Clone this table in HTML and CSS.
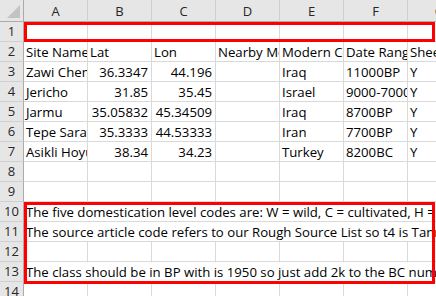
FILE: index.html
```html
<!DOCTYPE html>
<html>
<head>
<meta charset="utf-8">
<link rel="stylesheet" href="styles.css">
</head>
<body>
<div class="sheet">
  <div class="corner"><div class="tri"></div></div>
  <div class="ch">A</div><div class="ch">B</div><div class="ch">C</div><div class="ch">D</div><div class="ch">E</div><div class="ch">F</div><div class="ch">G</div>

  <div class="rh">1</div><div class="c"></div><div class="c"></div><div class="c"></div><div class="c"></div><div class="c"></div><div class="c"></div><div class="c"></div>

  <div class="rh">2</div><div class="c">Site Name</div><div class="c">Lat</div><div class="c">Lon</div><div class="c">Nearby Modern Site</div><div class="c">Modern Country</div><div class="c">Date Range</div><div class="c">Sheep</div>

  <div class="rh">3</div><div class="c">Zawi Chemi Shanidar</div><div class="c n">36.3347</div><div class="c n">44.196</div><div class="c"></div><div class="c">Iraq</div><div class="c">11000BP</div><div class="c">Y</div>

  <div class="rh">4</div><div class="c">Jericho</div><div class="c n">31.85</div><div class="c n">35.45</div><div class="c"></div><div class="c">Israel</div><div class="c">9000-7000BC</div><div class="c">Y</div>

  <div class="rh">5</div><div class="c">Jarmu</div><div class="c n">35.05832</div><div class="c n">45.34509</div><div class="c"></div><div class="c">Iraq</div><div class="c">8700BP</div><div class="c">Y</div>

  <div class="rh">6</div><div class="c">Tepe Sarab</div><div class="c n">35.3333</div><div class="c n">44.53333</div><div class="c"></div><div class="c">Iran</div><div class="c">7700BP</div><div class="c">Y</div>

  <div class="rh">7</div><div class="c">Asikli Hoyuk</div><div class="c n">38.34</div><div class="c n">34.23</div><div class="c"></div><div class="c">Turkey</div><div class="c">8200BC</div><div class="c">Y</div>

  <div class="rh">8</div><div class="c"></div><div class="c"></div><div class="c"></div><div class="c"></div><div class="c"></div><div class="c"></div><div class="c"></div>

  <div class="rh">9</div><div class="c"></div><div class="c"></div><div class="c"></div><div class="c"></div><div class="c"></div><div class="c"></div><div class="c"></div>

  <div class="rh">10</div><div class="c wide">The five domestication level codes are: W = wild, C = cultivated, H = hybrid, D = domesticated</div>

  <div class="rh">11</div><div class="c wide">The source article code refers to our Rough Source List so t4 is Tanno and Willcox</div>

  <div class="rh">12</div><div class="c"></div><div class="c"></div><div class="c"></div><div class="c"></div><div class="c"></div><div class="c"></div><div class="c"></div>

  <div class="rh">13</div><div class="c wide">The class should be in BP with is 1950 so just add 2k to the BC numbers</div>

  <div class="rh">14</div><div class="c"></div><div class="c"></div><div class="c"></div><div class="c"></div><div class="c"></div><div class="c"></div><div class="c"></div>

  <div class="hl hl1"></div>
  <div class="hl hl2"></div>
</div>
</body>
</html>
```

FILE: styles.css
```css
html, body {
  margin: 0;
  padding: 0;
  background: #ffffff;
  overflow: hidden;
  width: 436px;
  height: 296px;
}

.sheet {
  position: relative;
  display: grid;
  grid-template-columns: 24px repeat(7, 64px);
  grid-template-rows: 22px repeat(14, 20px);
  font-family: "Open Sans", "Liberation Sans", sans-serif;
  font-size: 13.2px;
  color: #000000;
}

.corner {
  background: #e6e6e6;
  border-right: 1px solid #ababab;
  border-bottom: 1px solid #ababab;
  box-sizing: border-box;
  position: relative;
}

.tri {
  position: absolute;
  right: 3px;
  bottom: 3px;
  width: 0;
  height: 0;
  border-left: 13px solid transparent;
  border-bottom: 13px solid #c3c3c3;
}

.ch {
  background: #e6e6e6;
  border-right: 1px solid #cfcfcf;
  border-bottom: 1px solid #ababab;
  box-sizing: border-box;
  display: flex;
  align-items: center;
  justify-content: center;
  color: #262626;
  padding-top: 1px;
  font-size: 13px;
}

.rh {
  background: #e6e6e6;
  border-right: 1px solid #ababab;
  border-bottom: 1px solid #cfcfcf;
  box-sizing: border-box;
  display: flex;
  align-items: flex-end;
  justify-content: center;
  color: #262626;
  padding-bottom: 1px;
  font-size: 13px;
}

.c {
  border-right: 1px solid #d9d9d9;
  border-bottom: 1px solid #d9d9d9;
  box-sizing: border-box;
  overflow: hidden;
  white-space: nowrap;
  padding: 0 2px 0 2px;
  display: flex;
  align-items: flex-end;
  line-height: 18px;
}

.n {
  justify-content: flex-end;
  padding-right: 3px;
}

.wide {
  grid-column: 2 / span 7;
  border-right: none;
}

.hl {
  position: absolute;
  left: 24px;
  width: 411px;
  border: 3px solid #ff0000;
  box-sizing: border-box;
  pointer-events: none;
}

.hl1 {
  top: 22px;
  height: 20px;
}

.hl2 {
  top: 202px;
  height: 82px;
}
```
